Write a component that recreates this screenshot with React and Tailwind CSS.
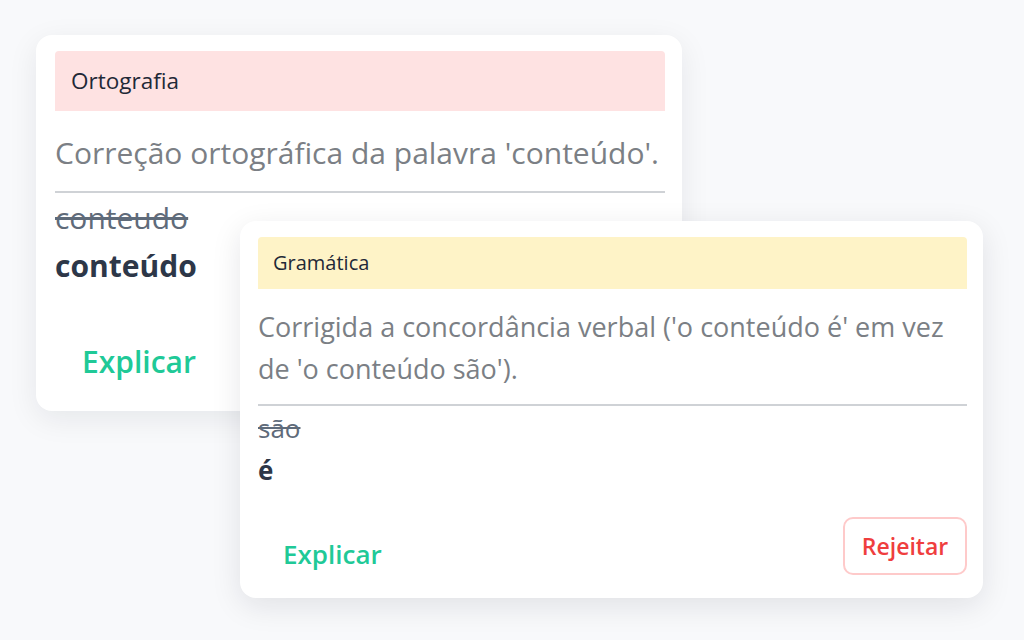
export default function App() {
  return (
    <div
      className="relative w-[1024px] h-[640px] bg-[#f8f9fb] overflow-hidden"
      style={{ fontFamily: '"Open Sans", "Noto Sans", sans-serif' }}
    >
      {/* Card Ortografia */}
      <div className="absolute left-[36px] top-[35px] w-[646px] h-[376px] bg-white rounded-[16px] shadow-[0_8px_30px_rgba(15,23,42,0.08)] pl-[19px] pr-[17px] pt-[16px] flex flex-col">
        <div className="h-[60px] bg-[#fee2e2] rounded-t-[4px] flex items-center px-[16px] text-[22.5px] text-[#1f2937]">
          Ortografia
        </div>
        <p className="mt-[22px] text-[30px] leading-[40px] text-[#7b7f85] whitespace-nowrap">
          Correção ortográfica da palavra 'conteúdo'.
        </p>
        <div className="mt-[18px] h-[2px] bg-[#cfd2d6]" />
        <div className="mt-[8px] text-[30px] leading-[34px] text-[#5f6b7a] line-through">conteudo</div>
        <div className="mt-[13px] text-[30px] leading-[36px] font-bold text-[#2d3748]">conteúdo</div>
        <div className="mt-[58px] pl-[27px] text-[30px] leading-[40px] font-semibold text-[#20c997]">Explicar</div>
      </div>

      {/* Card Gramática */}
      <div className="absolute left-[240px] top-[221px] w-[743px] h-[377px] bg-white rounded-[16px] shadow-[0_8px_30px_rgba(15,23,42,0.10)] pl-[18px] pr-[16px] pt-[16px] flex flex-col">
        <div className="h-[52px] bg-[#fef3c7] rounded-t-[4px] flex items-center px-[15px] text-[20px] text-[#1f2937]">
          Gramática
        </div>
        <p className="mt-[17px] text-[27px] leading-[42px] text-[#7b7f85] whitespace-nowrap">
          Corrigida a concordância verbal ('o conteúdo é' em vez
          <br />
          de 'o conteúdo são').
        </p>
        <div className="mt-[14px] h-[2px] bg-[#cfd2d6]" />
        <div className="mt-[7px] text-[26px] leading-[30px] text-[#5f6b7a] line-through">são</div>
        <div className="mt-[10px] text-[26px] leading-[34px] font-bold text-[#2d3748]">é</div>
        <div className="mt-[30px] flex items-start justify-between">
          <button className="mt-[16px] pl-[25px] text-[26px] leading-[42px] font-semibold text-[#20c997]">Explicar</button>
          <button className="w-[124px] h-[58px] rounded-[10px] border-2 border-[#fecaca] text-[23px] font-semibold text-[#ef3e3e] flex items-center justify-center">
            Rejeitar
          </button>
        </div>
      </div>
    </div>
  );
}
